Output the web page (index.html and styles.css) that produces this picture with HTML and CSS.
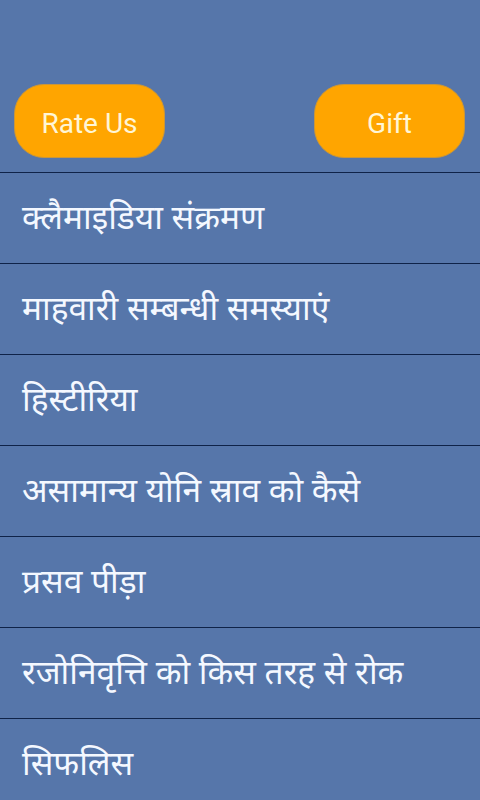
FILE: index.html
```html
<!DOCTYPE html>
<html lang="hi">
<head>
<meta charset="utf-8">
<link rel="stylesheet" href="styles.css">
</head>
<body>
<div class="app">
  <div class="top">
    <div class="btn">Rate Us</div>
    <div class="btn">Gift</div>
  </div>
  <ul class="list">
    <li class="item">क्लैमाइडिया संक्रमण</li>
    <li class="item">माहवारी सम्बन्धी समस्याएं</li>
    <li class="item">हिस्टीरिया</li>
    <li class="item">असामान्य योनि स्राव को कैसे</li>
    <li class="item">प्रसव पीड़ा</li>
    <li class="item">रजोनिवृत्ति को किस तरह से रोक</li>
    <li class="item">सिफलिस</li>
  </ul>
</div>
</body>
</html>
```
FILE: styles.css
```css
html, body {
  margin: 0;
  padding: 0;
  background: #5676aa;
}
.app {
  width: 480px;
  height: 800px;
  overflow: hidden;
  background: #5676aa;
}
.top {
  display: flex;
  justify-content: space-between;
  align-items: flex-start;
  padding: 84px 15px 0 14px;
  height: 172px;
  box-sizing: border-box;
}
.btn {
  width: 151px;
  height: 74px;
  box-sizing: border-box;
  background: #ffa500;
  border: 1px solid #c9963a;
  border-radius: 30px;
  color: #fff6d6;
  font-family: Roboto, "Liberation Sans", sans-serif;
  font-size: 28px;
  padding-top: 4px;
  display: flex;
  align-items: center;
  justify-content: center;
}
.list {
  list-style: none;
  margin: 0;
  padding: 0;
}
.item {
  height: 91px;
  box-sizing: border-box;
  border-top: 1px solid #0f2348;
  padding-left: 22px;
  display: flex;
  align-items: center;
  color: #f4f8ff;
  font-family: "Noto Sans", sans-serif;
  font-size: 33.5px;
  padding-bottom: 4px;
}
```
